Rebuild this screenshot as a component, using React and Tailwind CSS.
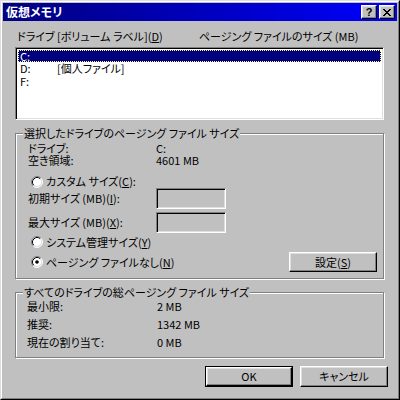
import React from "react";

// classic Win2000 3D edges
const raised =
  "bg-[#c0c0c0] border border-t-white border-l-white border-r-black border-b-black shadow-[inset_-1px_-1px_0_#808080,inset_1px_1px_0_#dfdfdf]";
const sunken =
  "border border-t-[#808080] border-l-[#808080] border-r-white border-b-white shadow-[inset_1px_1px_0_#000,inset_-1px_-1px_0_#dfdfdf]";

const Radio = ({ checked }) => (
  <svg width="12" height="12" viewBox="0 0 12 12" className="shrink-0">
    <circle cx="6" cy="6" r="5" fill="#fff" />
    <path d="M2.11 9.89 A5.5 5.5 0 0 1 9.89 2.11" fill="none" stroke="#808080" />
    <path d="M9.89 2.11 A5.5 5.5 0 0 1 2.11 9.89" fill="none" stroke="#fff" />
    <path d="M2.82 9.18 A4.5 4.5 0 0 1 9.18 2.82" fill="none" stroke="#000" />
    <path d="M9.18 2.82 A4.5 4.5 0 0 1 2.82 9.18" fill="none" stroke="#dfdfdf" />
    {checked && <circle cx="6" cy="6" r="1.8" fill="#000" />}
  </svg>
);

const GroupBox = ({ label, className, children }) => (
  <div
    className={`relative w-[369px] border border-[#808080] shadow-[inset_1px_1px_0_#fff,1px_1px_0_#fff] ${className}`}
  >
    <span className="absolute left-[7px] top-[-6px] bg-[#c0c0c0] px-[1px] leading-[11px]">{label}</span>
    {children}
  </div>
);

const Button = ({ children, isDefault, className = "" }) =>
  isDefault ? (
    <div className={`border border-black ${className}`}>
      <div className={`${raised} h-full flex items-center justify-center`}>{children}</div>
    </div>
  ) : (
    <div className={`${raised} flex items-center justify-center ${className}`}>{children}</div>
  );

export default function App() {
  return (
    <div className="w-[400px] h-[400px] bg-[#c0c0c0] text-black text-[11px] leading-[11px] font-['Noto_Sans_CJK_JP','Noto_Sans',sans-serif] [font-feature-settings:'palt'] border border-t-[#dfdfdf] border-l-[#dfdfdf] border-r-black border-b-black">
      <div className="h-full border border-t-white border-l-white border-r-[#808080] border-b-[#808080] p-px">
        {/* title bar */}
        <div className="h-[18px] flex items-center bg-gradient-to-r from-[#000080] to-[#0000ff] pl-[3px] pr-[2px]">
          <span className="text-white font-bold text-[12px] leading-[12px] flex-1">仮想メモリ</span>
          <div className={`${raised} w-[16px] h-[14px] flex items-center justify-center text-[11px] font-bold font-['Liberation_Sans',sans-serif] leading-none`}>
            ?
          </div>
          <div className={`${raised} w-[16px] h-[14px] ml-[2px] flex items-center justify-center`}>
            <svg width="8" height="7" viewBox="0 0 8 7">
              <path d="M0 0h2v1h1v1h2v-1h1v-1h2v1h-1v1h-1v1h-1v1h1v1h1v1h1v1h-2v-1h-1v-1h-2v1h-1v1h-2v-1h1v-1h1v-1h1v-1h-1v-1h-1v-1h-1z" fill="#000" />
            </svg>
          </div>
        </div>

        <div className="pl-[12px]">
          {/* list header */}
          <div className="mt-[9px] h-[13px] flex items-center">
            <span className="ml-[2px] w-[182px]">
              ドライブ [ボリューム ラベル](<u>D</u>)
            </span>
            <span>ページング ファイルのサイズ (MB)</span>
          </div>

          {/* drive list */}
          <div className={`${sunken} mt-[4px] w-[369px] h-[73px] bg-white p-[2px]`}>
            <div className="h-[12px] bg-[#000080] text-white border border-dotted border-[#ffff80] flex items-center pl-px">
              C:
            </div>
            <div className="h-[13px] flex items-center pl-[2px]">
              <span className="w-[37px]">D:</span>
              <span>[個人ファイル]</span>
            </div>
            <div className="h-[13px] flex items-center pl-[2px]">F:</div>
          </div>

          {/* selected drive */}
          <GroupBox label="選択したドライブのページング ファイル サイズ" className="mt-[13px] h-[146px] pt-[8px]">
            <div className="h-[12px] flex items-center pl-[12px]">
              <span className="w-[128px]">ドライブ:</span>
              <span>C:</span>
            </div>
            <div className="h-[13px] flex items-center pl-[12px]">
              <span className="w-[128px]">空き領域:</span>
              <span>4601 MB</span>
            </div>
            <div className="mt-[8px] h-[13px] flex items-center gap-[3px] pl-[15px]">
              <Radio />
              <span>
                カスタム サイズ(<u>C</u>):
              </span>
            </div>
            <div className="h-[21px] flex items-center pl-[12px]">
              <span className="w-[128px]">
                初期サイズ (MB)(<u>I</u>):
              </span>
              <div className={`${sunken} w-[70px] h-[21px]`} />
            </div>
            <div className="mt-[3px] h-[21px] flex items-center pl-[12px]">
              <span className="w-[128px]">
                最大サイズ (MB)(<u>X</u>):
              </span>
              <div className={`${sunken} w-[70px] h-[21px]`} />
            </div>
            <div className="mt-[2px] h-[14px] flex items-center gap-[3px] pl-[15px]">
              <Radio />
              <span>
                システム管理サイズ(<u>Y</u>)
              </span>
            </div>
            <div className="mt-[3px] h-[20px] flex items-center pl-[15px]">
              <Radio checked />
              <span className="ml-[3px] flex-1">
                ページング ファイルなし(<u>N</u>)
              </span>
              <Button className="w-[88px] h-[20px] mr-[6px]">
                設定(<u>S</u>)
              </Button>
            </div>
          </GroupBox>

          {/* totals */}
          <GroupBox label="すべてのドライブの総ページング ファイル サイズ" className="mt-[13px] h-[66px] pt-[4px] pl-[11px]">
            {[
              ["最小限:", "2 MB"],
              ["推奨:", "1342 MB"],
              ["現在の割り当て:", "0 MB"],
            ].map(([k, v]) => (
              <div key={k} className="h-[18px] flex items-center">
                <span className="w-[130px]">{k}</span>
                <span>{v}</span>
              </div>
            ))}
          </GroupBox>
        </div>

        {/* dialog buttons */}
        <div className="mt-[8px] flex gap-[7px] pl-[202px]">
          <Button isDefault className="w-[88px] h-[21px]">
            OK
          </Button>
          <Button className="w-[88px] h-[21px]">キャンセル</Button>
        </div>
      </div>
    </div>
  );
}
